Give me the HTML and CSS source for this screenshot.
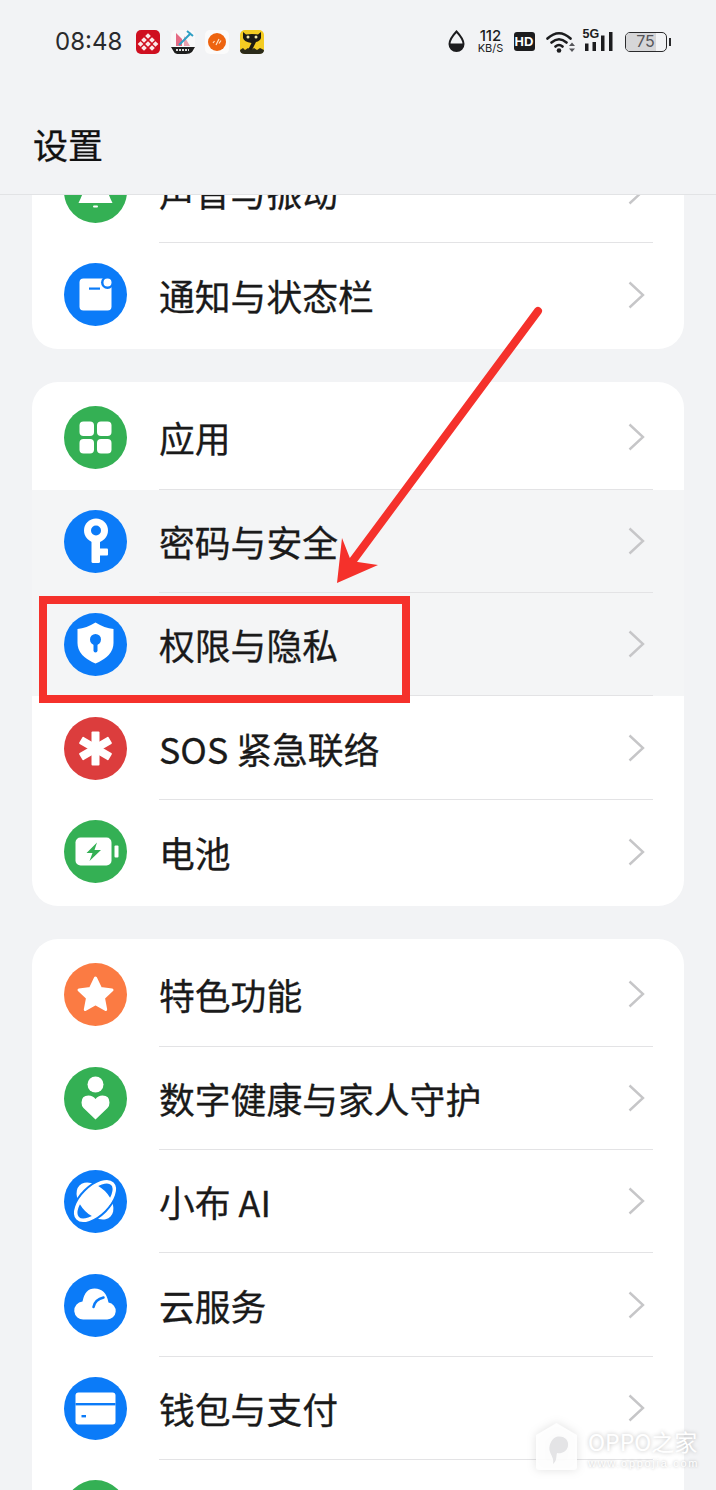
FILE: index.html
```html
<!DOCTYPE html>
<html lang="zh-CN">
<head>
  <meta charset="UTF-8">
  <meta name="viewport" content="width=device-width, initial-scale=1.0">
  <title>设置</title>
  <link rel="stylesheet" href="styles.css">
</head>
<body>

  <header class="top">
    <div class="status">
      <span class="time">08:48</span>
      <div class="apps">
        <svg class="app" viewBox="0 0 24 24">
          <rect width="24" height="24" rx="5" fill="#cf0f20"/>
          <g fill="#fbe9e9">
            <rect x="10" y="4" width="4" height="4" transform="rotate(45 12 6)"/>
            <rect x="6" y="8" width="4" height="4" transform="rotate(45 8 10)"/>
            <rect x="14" y="8" width="4" height="4" transform="rotate(45 16 10)"/>
            <rect x="2.500" y="12" width="4" height="4" transform="rotate(45 4.500 14)"/>
            <rect x="10" y="12" width="4" height="4" transform="rotate(45 12 14)"/>
            <rect x="17.500" y="12" width="4" height="4" transform="rotate(45 19.500 14)"/>
            <rect x="6" y="16" width="4" height="4" transform="rotate(45 8 18)"/>
            <rect x="14" y="16" width="4" height="4" transform="rotate(45 16 18)"/>
          </g>
        </svg>
        <svg class="app" viewBox="0 0 24 24">
          <rect width="24" height="24" rx="5" fill="#f8f8f9"/>
          <path d="M5 3l6 6v7H5z" fill="#e56a84"/>
          <path d="M13 6v10h6z" fill="#e9a0ae"/>
          <path d="M8 15L20 3M16 1l6 5" stroke="#2f9fc4" stroke-width="2" fill="none"/>
          <path d="M0 17h24l-3 5q-2 2-6 2H8q-4 0-5-2z" fill="#1e1e1e"/>
          <path d="M5 20h13" stroke="#ddd" stroke-width="2" stroke-dasharray="2 1"/>
        </svg>
        <svg class="app" viewBox="0 0 24 24">
          <rect width="24" height="24" rx="5" fill="#fbfbfb"/>
          <circle cx="12" cy="12" r="9" fill="#ee6410"/>
          <path d="M8 13l1.500-2M11 15l3-6M14 13.500l2-3" stroke="#fde3c8" stroke-width="1.200"/>
        </svg>
        <svg class="app" viewBox="0 0 24 24">
          <rect width="24" height="24" rx="5" fill="#f4cb22"/>
          <path d="M3 2l3 2.500q6-1 12 0L21 2v6q-1 3-5 4l-4 8H8l3.500-7Q4 12 3 8z" fill="#1c1a14"/>
          <path d="M0 20l3-2 2 2 3-2 3 2 3-2 3 2 3-2 4 2v0q0 4-5 4H5q-5 0-5-4z" fill="#2b2a1a"/>
          <circle cx="8" cy="7" r="1.500" fill="#f4e9a8"/>
          <circle cx="16" cy="7" r="1.500" fill="#f4e9a8"/>
        </svg>
      </div>
      <div class="sys">
        <svg class="drop" viewBox="0 0 17 23">
          <path d="M8.500 1.500Q15.500 9 15.500 14a7 7 0 0 1-14 0Q1.500 9 8.500 1.500z" fill="none" stroke="#1c1c1e" stroke-width="2"/>
          <path d="M1.500 13.500h14V14a7 7 0 0 1-14 0z" fill="#1c1c1e"/>
        </svg>
        <div class="speed"><span class="speed-num">112</span><span class="speed-unit">KB/S</span></div>
        <span class="hd">HD</span>
        <svg class="wifi" viewBox="0 0 30 24">
          <path d="M1.500 8.500Q13-2 24.500 8.500M5.500 12.500q7.500-6.500 15 0M9.500 16.500q3.500-3 7 0" fill="none" stroke="#1c1c1e" stroke-width="2.600" stroke-linecap="round"/>
          <circle cx="13" cy="20.500" r="2.300" fill="#1c1c1e"/>
          <path d="M23 16l3-3.500 3 3.500zM23 18.500l3 3.500 3-3.500z" fill="#55555a"/>
        </svg>
        <div class="net">
          <span class="net-label">5G</span>
          <svg class="bars" viewBox="0 0 28 19">
            <rect x="0" y="11.500" width="3.500" height="7.500" fill="#1c1c1e"/>
            <rect x="7.500" y="10" width="3.500" height="9" fill="#1c1c1e"/>
            <rect x="16" y="3.500" width="3.500" height="15.500" fill="#1c1c1e"/>
            <rect x="24" y="0" width="3.500" height="19" fill="#1c1c1e"/>
          </svg>
        </div>
        <div class="batt">
          <div class="batt-body"><span class="batt-fill"></span><span class="batt-num">75</span></div>
          <span class="batt-tip"></span>
        </div>
      </div>
    </div>
    <h1 class="title">设置</h1>
  </header>

  <main class="scroll">
    <div class="list">

      <section class="card">
        <div class="row">
          <svg class="ico" viewBox="0 0 63 63">
            <circle class="green" cx="31.500" cy="31.500" r="31.500"/>
            <path class="white" d="M31.500 12q-11 0-11 12 0 7-6 19h34Q42.500 31 42.500 24q0-12-11-12z"/>
            <rect class="white" x="29" y="45.500" width="5" height="2" rx="1"/>
          </svg>
          <div class="row-main"><span class="label">声音与振动</span><svg class="chev" viewBox="0 0 17 28"><path d="M1.500 1.500L15 14 1.500 26.500"/></svg></div>
        </div>
        <div class="row">
          <svg class="ico" viewBox="0 0 63 63">
            <circle class="blue" cx="31.500" cy="31.500" r="31.500"/>
            <rect class="white" x="15.500" y="15.500" width="32" height="32" rx="4"/>
            <circle class="blue" cx="43.500" cy="19.500" r="6.500"/>
            <circle class="white" cx="43.500" cy="19.500" r="4"/>
            <rect class="blue" x="25" y="24.500" width="11" height="2.200"/>
          </svg>
          <div class="row-main last"><span class="label">通知与状态栏</span><svg class="chev" viewBox="0 0 17 28"><path d="M1.500 1.500L15 14 1.500 26.500"/></svg></div>
        </div>
      </section>

      <section class="card">
        <div class="row">
          <svg class="ico" viewBox="0 0 63 63">
            <circle class="green" cx="31.500" cy="31.500" r="31.500"/>
            <rect class="white" x="15.500" y="15.500" width="14.500" height="14.500" rx="4"/>
            <rect class="white" x="33" y="15.500" width="14.500" height="14.500" rx="4"/>
            <rect class="white" x="15.500" y="33" width="14.500" height="14.500" rx="4"/>
            <rect class="white" x="33" y="33" width="14.500" height="14.500" rx="4"/>
          </svg>
          <div class="row-main"><span class="label">应用</span><svg class="chev" viewBox="0 0 17 28"><path d="M1.500 1.500L15 14 1.500 26.500"/></svg></div>
        </div>
        <div class="row hl">
          <svg class="ico" viewBox="0 0 63 63">
            <circle class="blue" cx="31.500" cy="31.500" r="31.500"/>
            <circle class="white" cx="32" cy="20.500" r="12"/>
            <circle class="blue" cx="32" cy="20.500" r="5"/>
            <rect class="white" x="27.500" y="30" width="8.500" height="23" rx="1.500"/>
            <rect class="white" x="35" y="38.500" width="9" height="7" rx="1"/>
          </svg>
          <div class="row-main"><span class="label">密码与安全</span><svg class="chev" viewBox="0 0 17 28"><path d="M1.500 1.500L15 14 1.500 26.500"/></svg></div>
        </div>
        <div class="row hl">
          <svg class="ico" viewBox="0 0 63 63">
            <circle class="blue" cx="31.500" cy="31.500" r="31.500"/>
            <path class="white" d="M31.500 9.500q9 5.500 18 6.500v14q0 13-18 20.500Q13.500 43 13.500 30V16q9-1 18-6.500z"/>
            <circle class="blue" cx="31.500" cy="26.500" r="5.500"/>
            <rect class="blue" x="29.500" y="27" width="4" height="12.500" rx="2"/>
          </svg>
          <div class="row-main"><span class="label">权限与隐私</span><svg class="chev" viewBox="0 0 17 28"><path d="M1.500 1.500L15 14 1.500 26.500"/></svg></div>
        </div>
        <div class="row">
          <svg class="ico" viewBox="0 0 63 63">
            <circle class="red" cx="31.500" cy="31.500" r="31.500"/>
            <g class="white">
              <rect x="27.500" y="14.500" width="8" height="34" rx="1"/>
              <rect x="27.500" y="14.500" width="8" height="34" rx="1" transform="rotate(60 31.500 31.500)"/>
              <rect x="27.500" y="14.500" width="8" height="34" rx="1" transform="rotate(120 31.500 31.500)"/>
            </g>
          </svg>
          <div class="row-main"><span class="label">SOS 紧急联络</span><svg class="chev" viewBox="0 0 17 28"><path d="M1.500 1.500L15 14 1.500 26.500"/></svg></div>
        </div>
        <div class="row">
          <svg class="ico" viewBox="0 0 63 63">
            <circle class="green" cx="31.500" cy="31.500" r="31.500"/>
            <rect class="white" x="11.500" y="17.500" width="36" height="28" rx="5"/>
            <rect class="white" x="50.500" y="25.500" width="4" height="12" rx="1"/>
            <path class="green" d="M33 22.500L22.500 33h6l-3 8L37 30h-6.500z"/>
          </svg>
          <div class="row-main last"><span class="label">电池</span><svg class="chev" viewBox="0 0 17 28"><path d="M1.500 1.500L15 14 1.500 26.500"/></svg></div>
        </div>
      </section>

      <section class="card">
        <div class="row">
          <svg class="ico" viewBox="0 0 63 63">
            <circle class="orange" cx="31.500" cy="31.500" r="31.500"/>
            <path class="white star" d="M31.500 15l5 10.500 11.500 1.500-8.500 8 2.200 11.500-10.200-5.700-10.200 5.700 2.200-11.500-8.500-8 11.500-1.500z"/>
          </svg>
          <div class="row-main"><span class="label">特色功能</span><svg class="chev" viewBox="0 0 17 28"><path d="M1.500 1.500L15 14 1.500 26.500"/></svg></div>
        </div>
        <div class="row">
          <svg class="ico" viewBox="0 0 63 63">
            <circle class="green" cx="31.500" cy="31.500" r="31.500"/>
            <circle class="white" cx="31.500" cy="17.500" r="8"/>
            <path class="white" d="M31.500 52.500L19.500 41q-2-2-2-5.500 0-7 7-7 4.500 0 7 3.500 2.500-3.500 7-3.500 7 0 7 7 0 3.500-2 5.500z"/>
          </svg>
          <div class="row-main"><span class="label">数字健康与家人守护</span><svg class="chev" viewBox="0 0 17 28"><path d="M1.500 1.500L15 14 1.500 26.500"/></svg></div>
        </div>
        <div class="row">
          <svg class="ico" viewBox="0 0 63 63">
            <circle class="blue" cx="31.500" cy="31.500" r="31.500"/>
            <ellipse class="white" cx="31" cy="31" rx="22" ry="14" transform="rotate(45 31 31)"/>
            <ellipse class="ring-blue" cx="31" cy="31" rx="27" ry="14.500" transform="rotate(-45 31 31)"/>
            <ellipse class="ring-white" cx="31" cy="31" rx="24.500" ry="12" transform="rotate(-45 31 31)"/>
          </svg>
          <div class="row-main"><span class="label">小布 AI</span><svg class="chev" viewBox="0 0 17 28"><path d="M1.500 1.500L15 14 1.500 26.500"/></svg></div>
        </div>
        <div class="row">
          <svg class="ico" viewBox="0 0 63 63">
            <circle class="blue" cx="31.500" cy="31.500" r="31.500"/>
            <path class="white" d="M20 45.500h23a8.500 8.500 0 0 0 1.500-16.900Q42 14.500 30.500 14.500 21 14.500 18.500 27.500a9 9 0 0 0 1.500 18z"/>
            <path class="cloud-line" d="M29.500 33q1.500-7.500 10-9.500"/>
          </svg>
          <div class="row-main"><span class="label">云服务</span><svg class="chev" viewBox="0 0 17 28"><path d="M1.500 1.500L15 14 1.500 26.500"/></svg></div>
        </div>
        <div class="row">
          <svg class="ico" viewBox="0 0 63 63">
            <circle class="blue" cx="31.500" cy="31.500" r="31.500"/>
            <rect class="white" x="11.500" y="15.500" width="40" height="32" rx="3"/>
            <rect class="blue" x="11.500" y="26" width="40" height="2.400"/>
            <rect class="blue" x="17.500" y="38" width="4.500" height="2.400"/>
          </svg>
          <div class="row-main"><span class="label">钱包与支付</span><svg class="chev" viewBox="0 0 17 28"><path d="M1.500 1.500L15 14 1.500 26.500"/></svg></div>
        </div>
        <div class="row">
          <svg class="ico" viewBox="0 0 63 63">
            <circle class="green" cx="31.500" cy="31.500" r="31.500"/>
          </svg>
        </div>
      </section>

    </div>
  </main>

  <!-- annotation drawn over the screenshot -->
  <svg class="arrow" viewBox="0 0 716 1490">
    <path d="M538 311L346 570" stroke="#f5312b" stroke-width="8" stroke-linecap="round" fill="none"/>
    <path d="M337 583L342 538 351 561 378 565z" fill="#f5312b"/>
  </svg>
  <div class="mark"></div>

  <div class="wm">
    <svg class="wm-logo" viewBox="0 0 41 47">
      <path d="M20.500 0L41 12v32q0 3-3 3H3q-3 0-3-3V12z" fill="#fff" fill-opacity=".9"/>
      <path d="M20 14c8-2 13 3 12 9s-7 8-11 7c-1 4 0 8-4 11 1-5-1-7-3-12s1-13 6-15z" fill="#e4e4e6"/>
    </svg>
    <div class="wm-text">
      <span class="wm-name">OPPO之家</span>
      <span class="wm-url">www.oppojia.com</span>
    </div>
  </div>

</body>
</html>
```

FILE: styles.css
```css
* {
  box-sizing: border-box;
}
html, body {
  margin: 0;
  padding: 0;
}
body {
  position: relative;
  width: 716px;
  height: 1490px;
  overflow: hidden;
  background-color: #f2f3f5;
  font-family: "Noto Sans CJK SC", "Noto Sans", sans-serif;
  color: #1a1a1a;
}

/* header + status bar */
.top {
  height: 195px;
  border-bottom: 1px solid #e2e3e5;
  padding-top: 29px;
}
.status {
  display: flex;
  align-items: center;
  height: 25px;
  padding-left: 55px;
}
.time {
  width: 81px;
  font-family: Inter, sans-serif;
  font-size: 24px;
  color: #2a2a2c;
}
.apps {
  display: flex;
  gap: 10.500px;
}
.app {
  display: block;
  width: 24px;
  height: 24px;
}
.sys {
  display: flex;
  align-items: center;
  margin-left: 184px;
}
.drop {
  display: block;
  width: 17px;
  height: 23px;
  margin-right: 12px;
}
.speed {
  display: flex;
  flex-direction: column;
  align-items: center;
  width: 28px;
  margin-right: 9px;
  font-family: Inter, sans-serif;
  color: #1c1c1e;
}
.speed-num {
  font-size: 15px;
  font-weight: 500;
  line-height: 14px;
}
.speed-unit {
  font-size: 11px;
  line-height: 11px;
}
.hd {
  width: 21px;
  height: 19px;
  border-radius: 3px;
  background-color: #1c1c1e;
  color: #fff;
  font-family: "Liberation Sans", sans-serif;
  font-size: 13px;
  font-weight: bold;
  line-height: 19px;
  text-align: center;
  margin-right: 11px;
}
.wifi {
  display: block;
  width: 30px;
  height: 24px;
  margin-right: 9px;
}
.net {
  position: relative;
  width: 30px;
  height: 19px;
  margin-right: 10px;
}
.net-label {
  position: absolute;
  left: -2px;
  top: -4px;
  font-family: "Liberation Sans", sans-serif;
  font-size: 12.500px;
  line-height: 13px;
  font-weight: bold;
  color: #1c1c1e;
}
.bars {
  display: block;
  width: 28px;
  height: 19px;
}
.batt {
  display: flex;
  align-items: center;
}
.batt-body {
  position: relative;
  width: 42px;
  height: 20px;
  border: 1.500px solid #2a2a2c;
  border-radius: 5px;
  overflow: hidden;
}
.batt-fill {
  position: absolute;
  left: 0;
  top: 0;
  bottom: 0;
  width: 75%;
  background-color: #d6d6d8;
}
.batt-num {
  position: relative;
  display: block;
  font-family: Inter, sans-serif;
  font-size: 16px;
  line-height: 17px;
  text-align: center;
  color: #55555a;
}
.batt-tip {
  width: 2px;
  height: 8px;
  margin-left: 2px;
  background-color: #2a2a2c;
}
.title {
  margin: 66px 0 0 33px;
  font-size: 35px;
  font-weight: 400;
  line-height: 48px;
  color: #111;
  -webkit-text-stroke: .3px #111;
}

/* scrolled list */
.scroll {
  height: 1295px;
  overflow: hidden;
}
.list {
  display: flex;
  flex-direction: column;
  gap: 33px;
  margin-top: -59.500px;
  padding: 0 32px;
}
.card {
  flex: none;
  padding: 4px 0 3px;
  background-color: #fff;
  border-radius: 26px;
  overflow: hidden;
}
.row {
  display: flex;
  align-items: center;
  height: 103.400px;
  padding-left: 31.500px;
}
.row.hl {
  background-color: #f4f5f6;
}
.ico {
  display: block;
  flex: none;
  width: 63px;
  height: 63px;
  margin-right: 32.500px;
}
.row-main {
  display: flex;
  flex: 1;
  align-items: center;
  justify-content: space-between;
  height: 100%;
  margin-right: 31px;
  padding-right: 8px;
  border-bottom: 1px solid #e3e3e5;
}
.row-main.last {
  border-bottom: none;
}
.label {
  font-size: 35.800px;
  line-height: 48px;
  color: #1a1a1a;
  -webkit-text-stroke: .3px #1a1a1a;
}
.chev {
  display: block;
  width: 17px;
  height: 28px;
}
.chev path {
  fill: none;
  stroke: #c6c6c8;
  stroke-width: 2.400;
}

/* icon colours */
.white { fill: #fff; }
.green { fill: #34b054; }
.blue { fill: #0b7bf8; }
.red { fill: #dc3d3d; }
.orange { fill: #fb7b43; }
.star {
  stroke: #fff;
  stroke-width: 3;
  stroke-linejoin: round;
}
.ring-blue {
  fill: none;
  stroke: #0b7bf8;
  stroke-width: 2.500;
}
.ring-white {
  fill: none;
  stroke: #fff;
  stroke-width: 3.500;
}
.cloud-line {
  fill: none;
  stroke: #0b7bf8;
  stroke-width: 2.500;
  stroke-linecap: round;
}

/* red annotation */
.arrow {
  position: absolute;
  left: 0;
  top: 0;
  width: 716px;
  height: 1490px;
}
.mark {
  position: absolute;
  left: 39px;
  top: 596px;
  width: 371px;
  height: 107px;
  border: 8px solid #f5312b;
}

/* watermark */
.wm {
  position: absolute;
  left: 536px;
  top: 1423px;
  display: flex;
  gap: 11px;
}
.wm-logo {
  display: block;
  width: 41px;
  height: 47px;
  filter: drop-shadow(0 0 5px rgba(0, 0, 0, .13));
}
.wm-text {
  display: flex;
  flex-direction: column;
  padding-top: 3px;
}
.wm-name {
  font-size: 23px;
  line-height: 30px;
  color: #fff;
  text-shadow: 0 0 4px rgba(0, 0, 0, .25);
}
.wm-url {
  font-family: "Liberation Sans", sans-serif;
  font-size: 11px;
  letter-spacing: 1.700px;
  line-height: 14px;
  color: #fff;
  text-shadow: 0 0 3px rgba(0, 0, 0, .3);
}
```
